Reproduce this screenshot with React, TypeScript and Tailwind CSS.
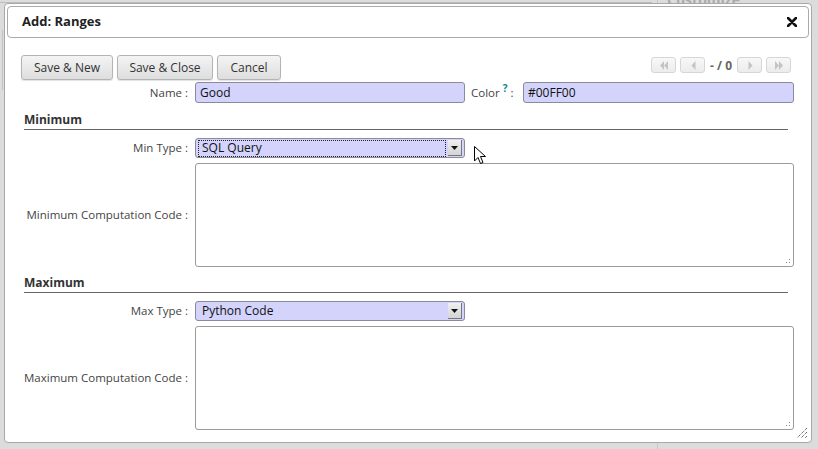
import React from "react";

const font = { fontFamily: '"Open Sans", "DejaVu Sans", sans-serif' };

function PagerBtn({ dir }: { dir: "first" | "prev" | "next" | "last" }) {
  const tri = (x: number, flip: boolean) =>
    flip ? `M${x} 3 L${x + 4} 7.5 L${x} 12 Z` : `M${x + 4} 3 L${x} 7.5 L${x + 4} 12 Z`;
  let d = "";
  if (dir === "first") d = tri(8, false) + tri(12, false);
  if (dir === "prev") d = tri(10.5, false);
  if (dir === "next") d = tri(10.5, true);
  if (dir === "last") d = tri(8, true) + tri(12, true);
  return (
    <div className="w-[25px] h-[16px] rounded-[3px] border border-[#d6d6d6] bg-gradient-to-b from-[#f8f8f8] to-[#ececec]">
      <svg width="25" height="15" viewBox="0 0 25 15">
        <path d={d} fill="#c4c4c4" />
      </svg>
    </div>
  );
}

function Button({ children, w }: { children: React.ReactNode; w: string }) {
  return (
    <button
      className={`${w} h-[25px] rounded-[3px] border border-[#b4b4b4] bg-gradient-to-b from-[#f4f4f4] to-[#dedede] text-[12px] text-[#333] shadow-[0_1px_1px_rgba(0,0,0,0.12)]`}
    >
      {children}
    </button>
  );
}

function Select({ value, focus }: { value: string; focus?: boolean }) {
  return (
    <div className="relative w-[270px] h-[20px] rounded-[3px] border border-[#8a8a9a] bg-[#d3d3fc] flex items-center">
      <div
        className={`flex-1 h-[15px] ml-[3px] mr-[19px] flex items-center pl-[3px] text-[12px] text-[#111] ${
          focus ? "outline-1 outline-dotted outline-[#222]" : ""
        }`}
      >
        {value}
      </div>
      <div className="absolute right-[2px] top-[1px] w-[14px] h-[16px] bg-gradient-to-b from-[#f0f0f0] to-[#d4d4d4] border-r border-b border-[#777] flex items-center justify-center">
        <svg width="7" height="4" viewBox="0 0 7 4">
          <path d="M0 0 L7 0 L3.5 4 Z" fill="#111" />
        </svg>
      </div>
    </div>
  );
}

function TextArea() {
  return (
    <div className="relative w-[599px] h-[104px] rounded-[3px] border border-[#9a9a9a] bg-white">
      <svg className="absolute right-[2px] bottom-[2px]" width="5" height="5" viewBox="0 0 5 5">
        <rect x="3" y="0" width="1" height="1" fill="#888" />
        <rect x="3" y="3" width="1" height="1" fill="#888" />
        <rect x="0" y="3" width="1" height="1" fill="#888" />
      </svg>
    </div>
  );
}

function Row({ label, children, className = "" }: { label: string; children: React.ReactNode; className?: string }) {
  return (
    <div className={`flex items-center ${className}`}>
      <div className="w-[168px] pr-[1px] text-right text-[11.5px] text-[#444] whitespace-nowrap">{label}</div>
      <div className="ml-[6px]">{children}</div>
    </div>
  );
}

function Heading({ title, className = "" }: { title: string; className?: string }) {
  return (
    <div className={`ml-[3px] w-[764px] border-b border-[#666] ${className}`}>
      <div className="text-[12px] font-bold text-[#333] leading-[15px] pb-[2px]">{title}</div>
    </div>
  );
}

export default function App() {
  return (
    <div className="relative w-[818px] h-[449px] overflow-hidden bg-[#dcdcdc]" style={font}>
      {/* page behind the dialog */}
      <div className="absolute left-0 top-0 w-[652px] h-[3px] border-b border-[#bdbdbd]" />
      <div className="absolute left-[657px] top-0 w-px h-[449px] bg-[#c8c8c8]" />
      <div className="absolute left-[667px] top-[-11px] text-[14px] font-bold text-[#aaa]">Customize</div>
      <div className="absolute left-[2px] top-[30px] w-px h-[60px] bg-[#c4c4c4]" />

      <div className="relative pt-[3px] pl-[4px]">
        <div className="relative w-[808px] h-[440px] rounded-[4px] border border-[#a8a8a8] bg-white p-[2px]">
          {/* title bar */}
          <div className="h-[32px] rounded-[4px] border border-[#aaa] bg-white flex items-center justify-between pl-[14px] pr-[11px]">
            <div className="text-[13px] font-bold text-[#222]">Add: Ranges</div>
            <svg width="10" height="10" viewBox="0 0 10 10">
              <path d="M1 1 L9 9 M9 1 L1 9" stroke="#111" strokeWidth="2.6" strokeLinecap="round" />
            </svg>
          </div>

          <div className="pl-[14px]">
            {/* toolbar */}
            <div className="flex items-start justify-between mt-[17px] w-[770px]">
              <div className="flex gap-[4px]">
                <Button w="w-[92px]">Save &amp; New</Button>
                <Button w="w-[96px]">Save &amp; Close</Button>
                <Button w="w-[64px]">Cancel</Button>
              </div>
              <div className="flex items-center gap-[4px] mt-[2px]">
                <PagerBtn dir="first" />
                <PagerBtn dir="prev" />
                <div className="text-[12px] font-bold text-[#666] px-[1px] leading-[15px]">- / 0</div>
                <PagerBtn dir="next" />
                <PagerBtn dir="last" />
              </div>
            </div>

            {/* name + color */}
            <Row label="Name :" className="mt-[2px]">
              <div className="flex items-center">
                <div className="w-[270px] h-[21px] rounded-[3px] border border-[#8a8a9a] bg-[#d3d3fc] flex items-center px-[4px] text-[12px] text-[#111]">
                  Good
                </div>
                <div className="ml-[6px] w-[47px] text-[11.5px] text-[#444] whitespace-nowrap">
                  Color <sup className="text-[#11868a] font-bold text-[10px]">?</sup> :
                </div>
                <div className="ml-[5px] w-[271px] h-[21px] rounded-[3px] border border-[#8a8a9a] bg-[#d3d3fc] flex items-center px-[4px] text-[12px] text-[#111]">
                  #00FF00
                </div>
              </div>
            </Row>

            <Heading title="Minimum" className="mt-[9px]" />
            <Row label="Min Type :" className="mt-[8px]">
              <Select value="SQL Query" focus />
            </Row>
            <Row label="Minimum Computation Code :" className="mt-[5px]">
              <TextArea />
            </Row>

            <Heading title="Maximum" className="mt-[8px]" />
            <Row label="Max Type :" className="mt-[8px]">
              <Select value="Python Code" />
            </Row>
            <Row label="Maximum Computation Code :" className="mt-[5px]">
              <TextArea />
            </Row>
          </div>

          {/* dialog resize grip */}
          <svg className="absolute right-[3px] bottom-[3px]" width="12" height="12" viewBox="0 0 12 12">
            <path d="M11 1 L1 11 M11 5 L5 11 M11 9 L9 11" stroke="#333" strokeWidth="1" strokeDasharray="1 1" />
          </svg>
        </div>
      </div>

      {/* mouse cursor */}
      <svg className="absolute left-[474px] top-[146px]" width="13" height="20" viewBox="0 0 13 20">
        <path d="M0.5 0.5 L0.5 15 L4 11.5 L6.5 17.5 L9 16.5 L6.5 10.5 L11.5 10.5 Z" fill="#fff" stroke="#000" strokeWidth="1" />
      </svg>
    </div>
  );
}
